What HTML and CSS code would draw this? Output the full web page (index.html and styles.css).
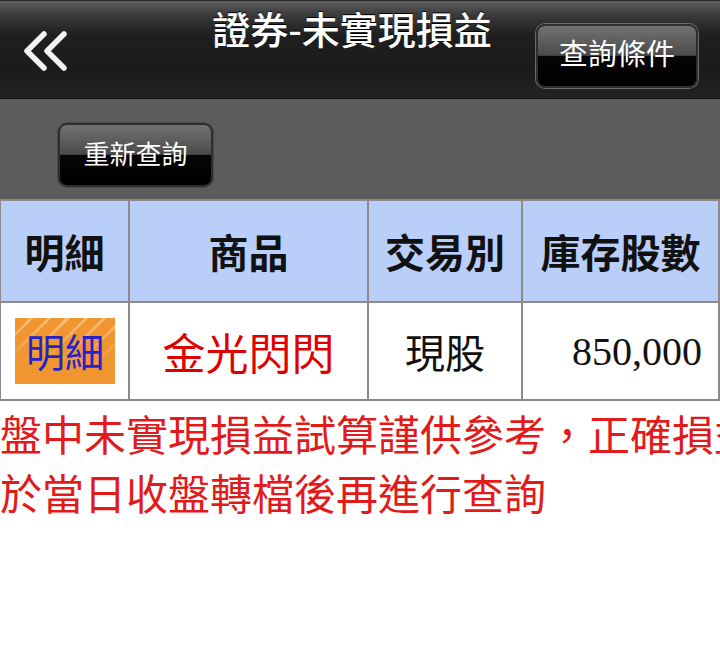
FILE: index.html
```html
<!DOCTYPE html>
<html>
<head>
  <meta charset="UTF-8">
  <title>證券-未實現損益</title>
  <link rel="stylesheet" href="styles.css">
</head>
<body>
  <!-- 標題列 -->
  <div class="topbar">
    <div class="back">
      <svg width="48" height="44" viewBox="0 0 48 44">
        <path d="M20 5 L3 22 L20 39 M40 5 L23 22 L40 39" fill="none" stroke="#f2f2f2" stroke-width="5.5" stroke-linecap="round" stroke-linejoin="round"/>
      </svg>
    </div>
    <div class="title">證券-未實現損益</div>
    <div class="right">
      <button class="gloss-btn query-btn">查詢條件</button>
    </div>
  </div>

  <!-- 重新查詢 -->
  <div class="toolbar">
    <button class="gloss-btn reload-btn">重新查詢</button>
  </div>

  <!-- 庫存列表 -->
  <table class="stock-table">
    <colgroup>
      <col class="c1">
      <col class="c2">
      <col class="c3">
      <col class="c4">
    </colgroup>
    <thead>
      <tr>
        <th>明細</th>
        <th>商品</th>
        <th>交易別</th>
        <th>庫存股數</th>
      </tr>
    </thead>
    <tbody>
      <tr>
        <td><span class="detail-btn">明細</span></td>
        <td class="name">金光閃閃</td>
        <td>現股</td>
        <td class="qty">850,000</td>
      </tr>
    </tbody>
  </table>

  <!-- 提示訊息 -->
  <div class="note">
    <p>盤中未實現損益試算謹供參考，正確損益請</p>
    <p>於當日收盤轉檔後再進行查詢</p>
  </div>
</body>
</html>
```

FILE: styles.css
```css
body {
  margin: 0;
  width: 720px;
  height: 668px;
  overflow: hidden;
  background-color: #fff;
  font-family: "Noto Sans CJK TC", "Noto Sans", sans-serif;
}
.topbar {
  display: flex;
  height: 99px;
  border-top: 1px solid #2a2a2a;
  border-bottom: 1px solid #111;
  box-sizing: border-box;
  background: linear-gradient(#5e5e5e 0px, #3a3a3a 14px, #1f1f1f 34px, #1b1b1b 70px, #232323 98px);
}
.back {
  width: 168px;
  padding: 28px 0 0 24px;
  box-sizing: border-box;
}
.title {
  flex: 1;
  text-align: center;
  color: #fff;
  font-size: 38px;
  font-weight: 500;
  line-height: 54px;
  margin-top: 0;
  text-shadow: 0 -1px 0 #000;
}
.right {
  width: 184px;
}
.gloss-btn {
  display: block;
  color: #fff;
  font-family: "Noto Sans CJK TC", "Noto Sans", sans-serif;
  border: 2px solid #2e2e2e;
  border-radius: 9px;
  background: linear-gradient(#727272 0%, #4a4a4a 49%, #050505 50%, #000 100%);
  box-shadow: 0 0 0 1px #6a6a6a;
  padding: 0;
  box-sizing: border-box;
}
.query-btn {
  width: 162px;
  height: 64px;
  margin-top: 23px;
  font-size: 29px;
  padding-bottom: 8px;
}
.toolbar {
  height: 100px;
  padding: 24px 0 0 58px;
  box-sizing: border-box;
  background-color: #5c5c5c;
}
.reload-btn {
  width: 155px;
  height: 64px;
  font-size: 26px;
  padding-bottom: 6px;
  box-shadow: 0 0 0 1px #4a4a4a;
}
.stock-table {
  border-collapse: collapse;
  table-layout: fixed;
  width: 719px;
  margin-left: -1px;
}
.c1 { width: 129px; }
.c2 { width: 239px; }
.c3 { width: 154px; }
.c4 { width: 197px; }
th, td {
  border: 2px solid #8c8c8c;
  text-align: center;
  padding: 0;
  white-space: nowrap;
}
th {
  height: 100px;
  background-color: #b9cffa;
  font-size: 40px;
  font-weight: bold;
  color: #111;
}
td {
  height: 96px;
  font-size: 40px;
  color: #111;
}
.detail-btn {
  display: block;
  width: 100px;
  height: 66px;
  margin-left: 14px;
  line-height: 64px;
  color: #2323c8;
  font-size: 39px;
  background:
    linear-gradient(rgba(240, 149, 47, 0.2), #f0952f 75%),
    repeating-linear-gradient(135deg, #f0952f 0px, #f0952f 10px, #f9c487 10px, #f9c487 13px);
}
.name {
  color: #e00000;
  font-size: 43px;
}
.qty {
  text-align: right;
  padding-right: 16px;
  font-family: "Liberation Serif", serif;
}
.note {
  color: #e21a1a;
  font-size: 42px;
  padding-top: 2px;
}
.note p {
  margin: 0;
  line-height: 59px;
  white-space: nowrap;
}
```
